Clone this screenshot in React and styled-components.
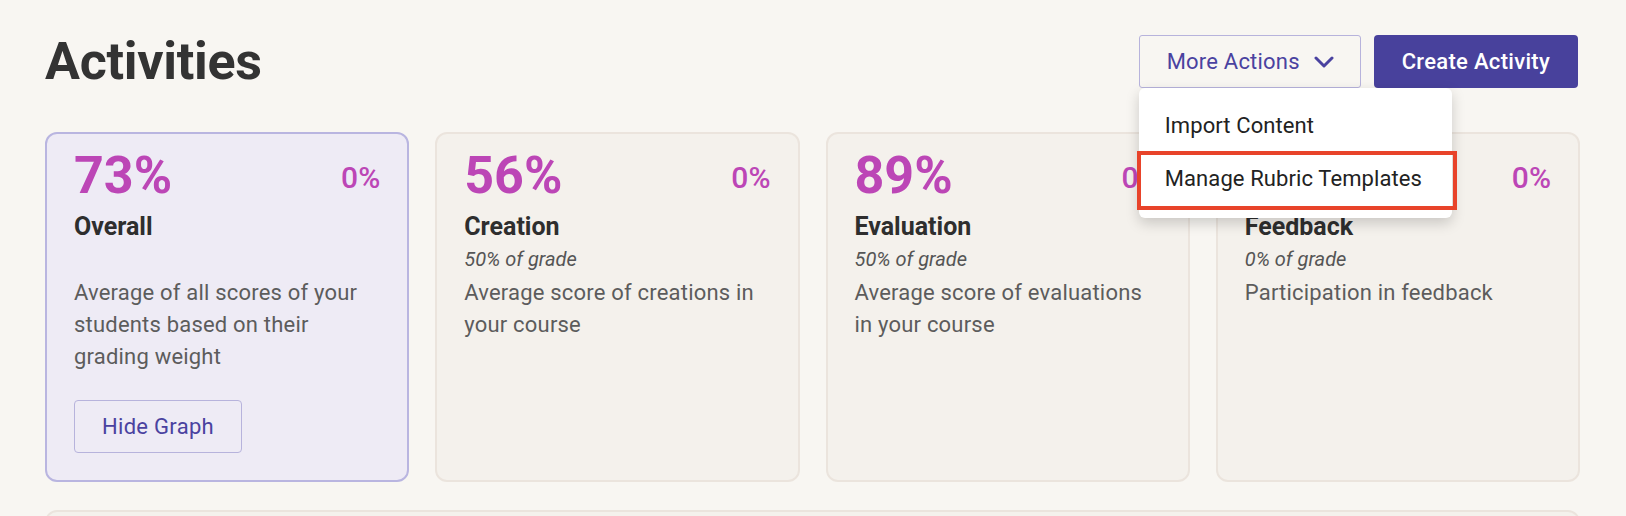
import React from 'react';
import styled, { createGlobalStyle } from 'styled-components';

const GlobalStyle = createGlobalStyle`
  body {
    margin: 0;
    background: #f8f6f2;
    font-family: Roboto, "Liberation Sans", Arial, sans-serif;
  }
`;

const Page = styled.div`
  padding: 35px 46px 0 45px;
  height: 516px;
  box-sizing: border-box;
  overflow: hidden;
`;

const Header = styled.div`
  display: flex;
  align-items: center;
  justify-content: space-between;
  height: 53px;
  padding-right: 2px;
`;

const Title = styled.h1`
  margin: 0;
  font-size: 52px;
  line-height: 53px;
  font-weight: 700;
  color: #333333;
  letter-spacing: -0.3px;
`;

const Actions = styled.div`
  display: flex;
  gap: 13px;
  align-items: stretch;
  height: 53px;
`;

const MenuWrap = styled.div`
  position: relative;
`;

const OutlineButton = styled.button`
  display: flex;
  align-items: center;
  gap: 14px;
  height: 100%;
  box-sizing: border-box;
  padding: 0 26px 0 27px;
  background: transparent;
  border: 1px solid #b7b3dc;
  border-radius: 3px;
  color: #4a42a0;
  font-family: inherit;
  font-size: 22px;
  letter-spacing: 0.2px;
  cursor: pointer;
`;

const PrimaryButton = styled.button`
  height: 100%;
  padding: 0 28px;
  background: #48419c;
  border: none;
  border-radius: 4px;
  color: #ffffff;
  font-family: inherit;
  font-size: 22px;
  font-weight: 500;
  letter-spacing: 0.3px;
  cursor: pointer;
`;

const Dropdown = styled.div`
  position: absolute;
  top: 100%;
  left: 0;
  width: 313px;
  padding: 12px 0 8px;
  background: #ffffff;
  border-radius: 6px;
  box-shadow: 0 5px 14px rgba(0, 0, 0, 0.18);
  z-index: 5;
`;

const MenuItem = styled.div`
  display: flex;
  align-items: center;
  box-sizing: border-box;
  height: ${({ highlighted }) => (highlighted ? '59px' : '51px')};
  padding: ${({ highlighted }) => (highlighted ? '0 0 5px 24px' : '0 0 0 26px')};
  margin: ${({ highlighted }) => (highlighted ? '0 -5px 0 -2px' : '0')};
  border: ${({ highlighted }) => (highlighted ? '4px solid #e8432a' : 'none')};
  color: #222222;
  font-size: 22px;
  letter-spacing: 0.1px;
  white-space: nowrap;
`;

const CardGrid = styled.div`
  display: grid;
  grid-template-columns: repeat(4, 1fr);
  gap: 26px;
  margin-top: 44px;
`;

const Card = styled.div`
  height: 350px;
  box-sizing: border-box;
  padding: 16px 27px 0 27px;
  border: 2px solid ${({ active }) => (active ? '#b9b5e0' : '#ebe4dd')};
  border-radius: 12px;
  background: ${({ active }) => (active ? '#eeebf5' : '#f4f1ec')};
`;

const ScoreRow = styled.div`
  display: flex;
  justify-content: space-between;
  align-items: flex-start;
`;

const Score = styled.div`
  font-size: 52px;
  line-height: 1;
  font-weight: 700;
  color: #bc46b6;
`;

const Change = styled.div`
  margin-top: 13px;
  font-size: 30px;
  line-height: 1;
  font-weight: 500;
  color: #bc46b6;
`;

const CardTitle = styled.div`
  margin-top: 10px;
  font-size: 25px;
  line-height: 30px;
  font-weight: 700;
  color: #2e2e2e;
`;

const Weight = styled.div`
  margin-top: 4px;
  min-height: 26px;
  font-size: 20px;
  line-height: 26px;
  font-style: italic;
  color: #555555;
`;

const Description = styled.p`
  margin: 5px 0 0;
  font-size: 22px;
  line-height: 32px;
  letter-spacing: 0.2px;
  color: #5c5c5c;
`;

const GraphButton = styled.button`
  margin-top: 27px;
  width: 168px;
  height: 53px;
  background: transparent;
  border: 1px solid #b7b3dc;
  border-radius: 4px;
  color: #4a42a0;
  font-family: inherit;
  font-size: 22px;
  letter-spacing: 0.3px;
  cursor: pointer;
`;

const Panel = styled.div`
  margin-top: 28px;
  height: 60px;
  border: 2px solid #ebe4dd;
  border-radius: 12px;
  background: #f4f1ec;
`;

const Chevron = () => (
  <svg width="20" height="12" viewBox="0 0 20 12" fill="none">
    <path d="M2 2l8 8 8-8" stroke="#4a42a0" strokeWidth="3" strokeLinecap="round" strokeLinejoin="round" />
  </svg>
);

const cards = [
  {
    id: 'overall',
    score: '73%',
    title: 'Overall',
    weight: '',
    text: 'Average of all scores of your students based on their grading weight',
    active: true,
  },
  {
    id: 'creation',
    score: '56%',
    title: 'Creation',
    weight: '50% of grade',
    text: 'Average score of creations in your course',
  },
  {
    id: 'evaluation',
    score: '89%',
    title: 'Evaluation',
    weight: '50% of grade',
    text: 'Average score of evaluations in your course',
  },
  {
    id: 'feedback',
    score: '',
    title: 'Feedback',
    weight: '0% of grade',
    text: 'Participation in feedback',
  },
];

export default function App() {
  return (
    <>
      <GlobalStyle />
      <Page>
        <Header>
          <Title>Activities</Title>
          <Actions>
            <MenuWrap>
              <OutlineButton>
                More Actions
                <Chevron />
              </OutlineButton>
              <Dropdown>
                <MenuItem>Import Content</MenuItem>
                <MenuItem highlighted>Manage Rubric Templates</MenuItem>
              </Dropdown>
            </MenuWrap>
            <PrimaryButton>Create Activity</PrimaryButton>
          </Actions>
        </Header>
        <CardGrid>
          {cards.map(({ id, score, title, weight, text, active }) => (
            <Card key={id} active={active}>
              <ScoreRow>
                <Score>{score || '\u00a0'}</Score>
                <Change>0%</Change>
              </ScoreRow>
              <CardTitle>{title}</CardTitle>
              <Weight>{weight}</Weight>
              <Description>{text}</Description>
              {active && <GraphButton>Hide Graph</GraphButton>}
            </Card>
          ))}
        </CardGrid>
        <Panel />
      </Page>
    </>
  );
}
